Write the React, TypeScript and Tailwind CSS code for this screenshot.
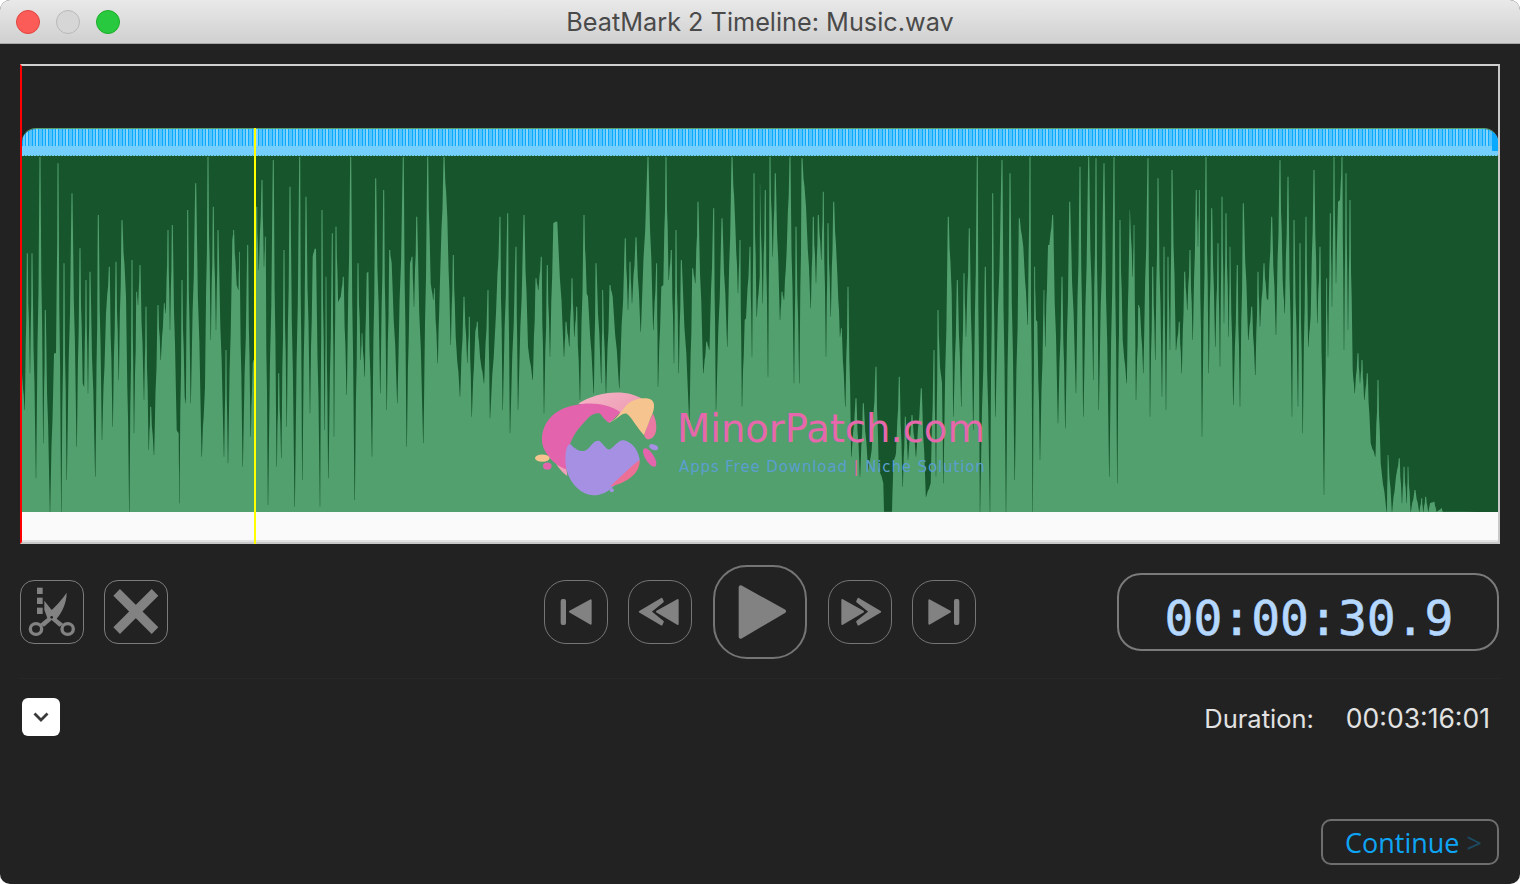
import React from "react";

// peaks traced from the waveform, [x, y] pairs at 3x scale, one list per 370px stretch
const STRETCH_A = [6,670,14,780,22,310,30,670,36,310,48,985,60,20,70,880,76,480,90,1085,102,610,108,610,114,40,124,1085,132,340,140,990,156,130,170,890,180,295,188,700,192,710,198,390,204,730,210,365,226,980,235,195,246,870,258,490,268,350,278,830,288,335,296,690,306,210,318,440,328,1085,336,330,342,850,350,425,354,465,360,345,372,750,378,470,386,900,392,770,402,915,414,465,422,630,433,460,437,490,444,240,450,540,457,225,470,840,476,850,478,1060,486,390,494,740,497,760,503,180,512,760,527,100,545,920,555,710,564,20,572,570,580,170,588,540,594,240,612,920,618,600,624,940,637,270,641,240,650,405,655,420,658,305,668,950,683,285,692,860,698,640,704,620,710,170,716,360,726,90,732,350,736,260,744,1065,760,30,770,950,776,670,784,925,792,300,800,830,810,110,824,1070,839,20,847,990,858,140,870,790,878,320,884,296,888,296,900,1070,906,180,914,840,918,380,925,985,937,250,942,860,948,230,955,455,962,440,970,380,980,735,992,20,1004,1050,1014,340,1022,630,1026,550,1034,680,1040,370,1044,365,1056,920,1067,85,1081,730,1091,120,1100,780,1109,300];
const STRETCH_B = [5,340,22,760,40,20,50,890,60,340,66,320,72,470,80,200,100,880,113,20,122,400,130,450,133,415,143,640,150,390,162,20,172,200,182,585,190,315,197,560,210,740,222,440,232,640,238,500,245,800,256,545,262,515,270,620,282,700,294,420,300,805,318,490,330,200,338,780,353,190,360,850,378,290,384,780,402,195,414,590,428,690,438,385,445,420,454,320,462,790,472,345,480,620,490,220,496,215,502,215,522,620,528,515,538,590,546,385,553,560,560,470,570,750,582,195,590,430,594,440,611,730,618,340,634,700,638,420,648,730,660,405,668,440,688,715,706,265,714,480,720,335,726,460,738,262,752,545,774,20,790,540,800,340,804,710,814,410,820,405,828,20,836,390,844,300,852,640,858,240,866,670,874,330,898,810,908,355,916,400,924,155,940,670,950,575,958,600,971,175,978,780,996,205,1012,590,1026,20,1036,225,1044,430,1050,270,1056,770,1064,510,1068,505,1080,290,1086,620,1092,70,1100,500,1109,380];
const STRETCH_C = [0,100,8,460,16,120,24,680,30,20,38,320,46,70,60,510,66,425,72,450,80,300,90,20,102,700,108,230,118,700,126,25,138,170,152,475,160,200,168,400,175,195,184,330,190,125,198,620,204,220,212,500,221,155,232,370,240,560,244,535,256,770,264,410,274,920,288,745,300,980,310,760,325,960,335,900,348,650,356,950,370,1000,372,1085,396,1085,400,940,408,910,418,680,428,1010,436,800,444,930,456,795,468,920,484,715,498,1040,512,1000,522,600,528,980,534,480,540,650,546,700,550,1000,565,200,575,430,580,800,592,390,604,770,612,370,618,560,628,235,640,840,652,20,660,1085,676,350,690,1085,698,130,706,800,726,30,738,1085,750,70,764,990,778,205,790,290,803,525,810,20,818,1085,824,350,828,510,832,515,840,930,852,420,856,590,864,285,868,285,878,195,894,820,906,380,916,835,929,155,948,730,960,50,970,800,986,20,1000,690,1008,25,1016,780,1032,40,1048,980,1062,20,1072,1000,1080,210,1088,570,1100,700,1109,180];
const STRETCH_D = [0,180,8,380,12,225,18,750,26,465,30,475,40,670,54,25,60,800,68,350,76,630,84,85,96,740,102,290,108,780,114,320,120,600,126,60,138,600,148,515,155,670,164,365,172,480,180,300,188,570,199,120,204,290,208,120,216,860,228,20,236,670,245,175,256,590,264,280,270,650,276,140,282,520,288,190,296,560,300,290,310,765,322,345,330,770,340,160,355,570,365,470,376,675,384,365,390,530,402,340,410,445,414,450,425,200,438,555,450,30,458,390,464,490,474,80,486,800,492,210,504,770,510,280,518,850,528,200,535,590,542,495,552,60,562,520,570,290,582,1035,590,385,594,620,601,190,606,470,612,20,618,400,624,155,630,150,636,20,642,600,648,70,654,540,660,150,668,660,674,730,684,610,690,700,696,630,703,750,712,670,722,880,736,920,744,690,752,940,770,1085,774,915,786,1085,798,980,808,925,816,1060,822,950,830,1060,834,950,842,1085,855,1020,868,1085,875,1045,880,1085,887,1040,895,1085,900,1060,912,1055,920,1085,935,1075,938,1085];

function wavePoints() {
  const stretches: [number, number[]][] = [
    [20, STRETCH_A],
    [390, STRETCH_B],
    [760, STRETCH_C],
    [1130, STRETCH_D],
  ];
  const raw: [number, number][] = [[22, 512]];
  for (const [origin, list] of stretches) {
    for (let i = 0; i < list.length; i += 2) {
      raw.push([origin + list[i] / 3, 150 + list[i + 1] / 3]);
    }
  }
  raw.push([1498, 512]);

  // light peaks get a small flat so they still show at the tip, dark ones stay sharp
  const pts: string[] = [];
  raw.forEach(([x, y], i) => {
    const prev = raw[i - 1];
    const next = raw[i + 1];
    if (prev && next && y < prev[1] && y < next[1]) {
      const half = Math.min(0.5, (x - prev[0]) / 3, (next[0] - x) / 3);
      pts.push(`${(x - half).toFixed(1)},${y.toFixed(1)}`);
      pts.push(`${(x + half).toFixed(1)},${y.toFixed(1)}`);
    } else if (prev && next && y > prev[1] && y > next[1]) {
      const half = Math.min(0.2, (x - prev[0]) / 3, (next[0] - x) / 3);
      pts.push(`${(x - half).toFixed(1)},${y.toFixed(1)}`);
      pts.push(`${(x + half).toFixed(1)},${y.toFixed(1)}`);
    } else {
      pts.push(`${x.toFixed(1)},${y.toFixed(1)}`);
    }
    if (!next) return;
    const dx = next[0] - x;
    const dy = next[1] - y;
    pts.push(`${(x + dx * 0.38).toFixed(1)},${(y + dy * 0.42).toFixed(1)}`);
    pts.push(`${(x + dx * 0.62).toFixed(1)},${(y + dy * 0.58).toFixed(1)}`);
  });
  return pts.join(" ");
}

function Logo() {
  return (
    <svg viewBox="30 20 400 340" className="absolute left-[508px] top-[321px] w-[133px] h-[113px]">
      <defs>
        <linearGradient id="logoBack" x1="0" y1="0" x2="1" y2="0.4">
          <stop offset="0" stopColor="#f6b5c6" />
          <stop offset="1" stopColor="#ee9fb6" />
        </linearGradient>
      </defs>
      <path d="M175 70C230 35 320 20 378 62L300 100Z" fill="url(#logoBack)" />
      <path d="M100 230L135 222L142 288C120 272 105 250 100 230Z" fill="#f0a0b8" />
      <path d="M302 96C260 65 180 60 120 90C70 115 50 180 80 220C95 245 120 262 140 268L145 215C150 180 170 150 190 130C210 105 225 95 240 100C250 110 258 125 270 128Z" fill="#e364ad" />
      <path d="M400 100C415 130 415 175 385 178C378 175 375 170 373 165C380 140 390 120 400 100Z" fill="#ea7aa3" />
      <path d="M260 125C285 130 300 95 325 70C345 55 375 50 395 58C410 68 402 95 392 115C385 135 378 150 373 165C350 140 335 110 320 100C300 98 285 130 260 125Z" fill="#f6c48e" />
      <path d="M137 250C135 215 140 190 152 192C170 212 190 220 205 205C215 195 225 178 238 182C250 190 258 208 268 208C280 205 295 178 312 180C335 185 355 205 360 240C340 280 300 305 280 320C260 340 235 348 215 345C180 342 140 300 137 250Z" fill="#a690e4" />
      <path d="M360 240C362 280 320 310 270 320C300 295 330 260 360 240Z" fill="#ec7096" />
      <ellipse cx="67" cy="234" rx="22" ry="11" fill="#f6c48e" />
      <ellipse cx="82" cy="258" rx="13" ry="11" fill="#e364ad" />
      <ellipse cx="390" cy="232" rx="13" ry="32" transform="rotate(-32 390 232)" fill="#e364ad" />
      <ellipse cx="402" cy="201" rx="14" ry="8" transform="rotate(20 402 201)" fill="#a690e4" />
      <circle cx="276" cy="331" r="6" fill="#a690e4" />
    </svg>
  );
}

function Timeline() {
  return (
    <div className="relative h-[480px] border-t-2 border-r-2 border-b-2 border-l-2 border-t-[#cfcfcf] border-r-[#c8c8c8] border-b-[#c8c8c8] border-l-[#ff0000] bg-[#222222]">
      <div className="h-[62px]" />
      <div className="relative h-[28px] rounded-t-[14px] overflow-hidden border-t border-[#52a06e]">
        <div className="h-[17px] bg-[repeating-linear-gradient(90deg,#08a9ff_0px,#08a9ff_1px,#68caff_1px,#68caff_3px,#08a9ff_3px,#08a9ff_4px,#8ad6ff_4px,#8ad6ff_6px,#08a9ff_6px,#08a9ff_7px,#55c3ff_7px,#55c3ff_10px)]" />
        <div className="h-[9px] bg-[#74cfff]" />
        <div className="h-px bg-[repeating-linear-gradient(90deg,#74cfff_0px,#74cfff_2px,#3f9a8a_2px,#3f9a8a_3px)]" />
        <div className="absolute right-0 top-[4px] w-[6px] h-[18px] bg-[#08a9ff]" />
      </div>
      <svg viewBox="22 156 1476 356" className="block w-[1476px] h-[356px] bg-[#17552c]">
        <polygon points={wavePoints()} fill="#52a06e" />
      </svg>
      <div className="h-[30px] bg-[#fafafa] border-b-2 border-[#e2e2e2]" />

      <div className="absolute left-[232px] top-[62px] bottom-[-2px] w-[2px] bg-[#ffff00]" />
      <Logo />
      <div className="absolute left-[655px] top-[341px] w-[310px] font-['DejaVu_Sans',sans-serif]">
        <div className="text-[38.5px] leading-[44px] text-[#e667ab] whitespace-nowrap">MinorPatch.com</div>
        <div className="mt-[6px] ml-[2px] text-[15px] leading-[20px] tracking-[0.88px] text-[#5a9fcf] whitespace-nowrap">
          Apps Free Download <span className="text-[#e667ab]">|</span> Niche Solution
        </div>
      </div>
    </div>
  );
}

const ICON = "#828282";

function CutIcon() {
  return (
    <svg viewBox="3 3 186 186" className="w-full h-full">
      <rect x="51" y="23" width="17" height="19" fill={ICON} />
      <rect x="51" y="53" width="17" height="19" fill={ICON} />
      <rect x="51" y="83" width="17" height="19" fill={ICON} />
      <path d="M73 62L95 90C108 78 128 56 140 38C140 68 126 98 110 116L130 132L118 140L95 120L72 140L60 132L82 114L73 90Z" fill={ICON} />
      <ellipse cx="48" cy="147" rx="17" ry="16" fill="none" stroke={ICON} strokeWidth="10" />
      <ellipse cx="143" cy="147" rx="17" ry="16" fill="none" stroke={ICON} strokeWidth="10" />
      <circle cx="95" cy="112" r="4" fill="#222222" />
    </svg>
  );
}

function CloseIcon() {
  return (
    <svg viewBox="3 3 186 186" className="w-full h-full">
      <path d="M38 37L153 152M153 37L38 152" stroke={ICON} strokeWidth="28" fill="none" />
    </svg>
  );
}

function SkipIcon({ flip }: { flip?: boolean }) {
  return (
    <svg viewBox="1 1 186 186" className={flip ? "w-full h-full -scale-x-100" : "w-full h-full"}>
      <rect x="48" y="55" width="16" height="78" rx="6" fill={ICON} />
      <polygon points="76,93 138,59 138,129" fill={ICON} stroke={ICON} strokeWidth="6" strokeLinejoin="round" />
    </svg>
  );
}

function SeekIcon({ flip }: { flip?: boolean }) {
  return (
    <svg viewBox="1 1 186 186" className={flip ? "w-full h-full -scale-x-100" : "w-full h-full"}>
      <polygon points="33,93 99,54 103,63 66,93 103,123 99,132" fill={ICON} stroke={ICON} strokeWidth="5" strokeLinejoin="round" />
      <polygon points="85,93 147,58 147,130" fill={ICON} stroke={ICON} strokeWidth="6" strokeLinejoin="round" />
    </svg>
  );
}

function PlayIcon() {
  return (
    <svg viewBox="7 7 270 270" className="w-full h-full">
      <polygon points="84,68 214,140 84,216" fill={ICON} stroke={ICON} strokeWidth="12" strokeLinejoin="round" />
    </svg>
  );
}

function Controls() {
  return (
    <div className="mt-[21px] h-[94px] flex items-center">
      <div className="w-[524px] flex gap-5">
        <div className="w-16 h-16 rounded-[14px] border border-[#7c7c7c]"><CutIcon /></div>
        <div className="w-16 h-16 rounded-[14px] border border-[#7c7c7c]"><CloseIcon /></div>
      </div>
      <div className="flex items-center gap-5">
        <div className="w-16 h-16 rounded-[22px] border border-[#757575]"><SkipIcon /></div>
        <div className="w-16 h-16 rounded-[22px] border border-[#757575]"><SeekIcon /></div>
        <div className="w-[94px] h-[94px] mx-px rounded-[34px] border-2 border-[#757575]"><PlayIcon /></div>
        <div className="w-16 h-16 rounded-[22px] border border-[#757575]"><SeekIcon flip /></div>
        <div className="w-16 h-16 rounded-[22px] border border-[#757575]"><SkipIcon flip /></div>
      </div>
      <div className="ml-auto mr-px w-[382px] h-[78px] rounded-[24px] border-2 border-[#7a7a7a] flex items-center justify-center">
        <span className="font-['DejaVu_Sans_Mono',monospace] text-[48px] leading-none text-[#b4d8ff] pt-[11px] pl-[2px] [-webkit-text-stroke:0.6px_#b4d8ff]">00:00:30.9</span>
      </div>
    </div>
  );
}

export default function App() {
  return (
    <div className="h-[884px] w-[1520px] bg-white overflow-hidden">
      <div className="h-full flex flex-col rounded-[10px] overflow-hidden bg-[#222222] font-['Inter',sans-serif]">
        <div className="relative h-[44px] shrink-0 flex items-center justify-center bg-gradient-to-b from-[#e9e9e9] to-[#d0d0d0] border-b border-[#a9a9a9]">
          <div className="absolute left-[16px] top-[10px] flex gap-[16px]">
            <div className="w-6 h-6 rounded-full bg-[#fc5c57] border border-[#e0443e]" />
            <div className="w-6 h-6 rounded-full bg-[#d6d6d6] border border-[#b8b8b8]" />
            <div className="w-6 h-6 rounded-full bg-[#28c83f] border border-[#1dad2b]" />
          </div>
          <span className="text-[25.25px] leading-none text-[#4a4a4a] pt-[3px]">BeatMark 2 Timeline: Music.wav</span>
        </div>

        <div className="flex-1 flex flex-col px-5 pt-5">
          <Timeline />
          <Controls />
          <div className="mt-[19px] h-px bg-[#272727]" />

          <div className="mt-[19px] h-[38px] flex items-center">
            <div className="ml-[2px] w-[38px] h-[38px] rounded-[6px] bg-white flex items-center justify-center">
              <svg viewBox="0 0 16 10" className="w-4 h-[10px]">
                <path d="M1.5 1.5L8 8L14.5 1.5" fill="none" stroke="#3a3a3a" strokeWidth="2.8" />
              </svg>
            </div>
            <div className="ml-auto mr-[10px] flex items-baseline gap-[32px] leading-none text-[#e2e2e2] pt-[3px]">
              <span className="text-[25.5px]">Duration:</span>
              <span className="text-[26.5px]">00:03:16:01</span>
            </div>
          </div>

          <div className="mt-[83px] mr-px flex justify-end">
            <div className="w-[178px] h-[46px] pl-[7px] rounded-[10px] border-2 border-[#6e6e6e] flex items-center justify-center gap-[7px] font-['Open_Sans',sans-serif] text-[27px] leading-none">
              <span className="text-[#0ea5f5]">Continue</span>
              <span className="text-[#1c4a63]">&gt;</span>
            </div>
          </div>
        </div>
      </div>
    </div>
  );
}
